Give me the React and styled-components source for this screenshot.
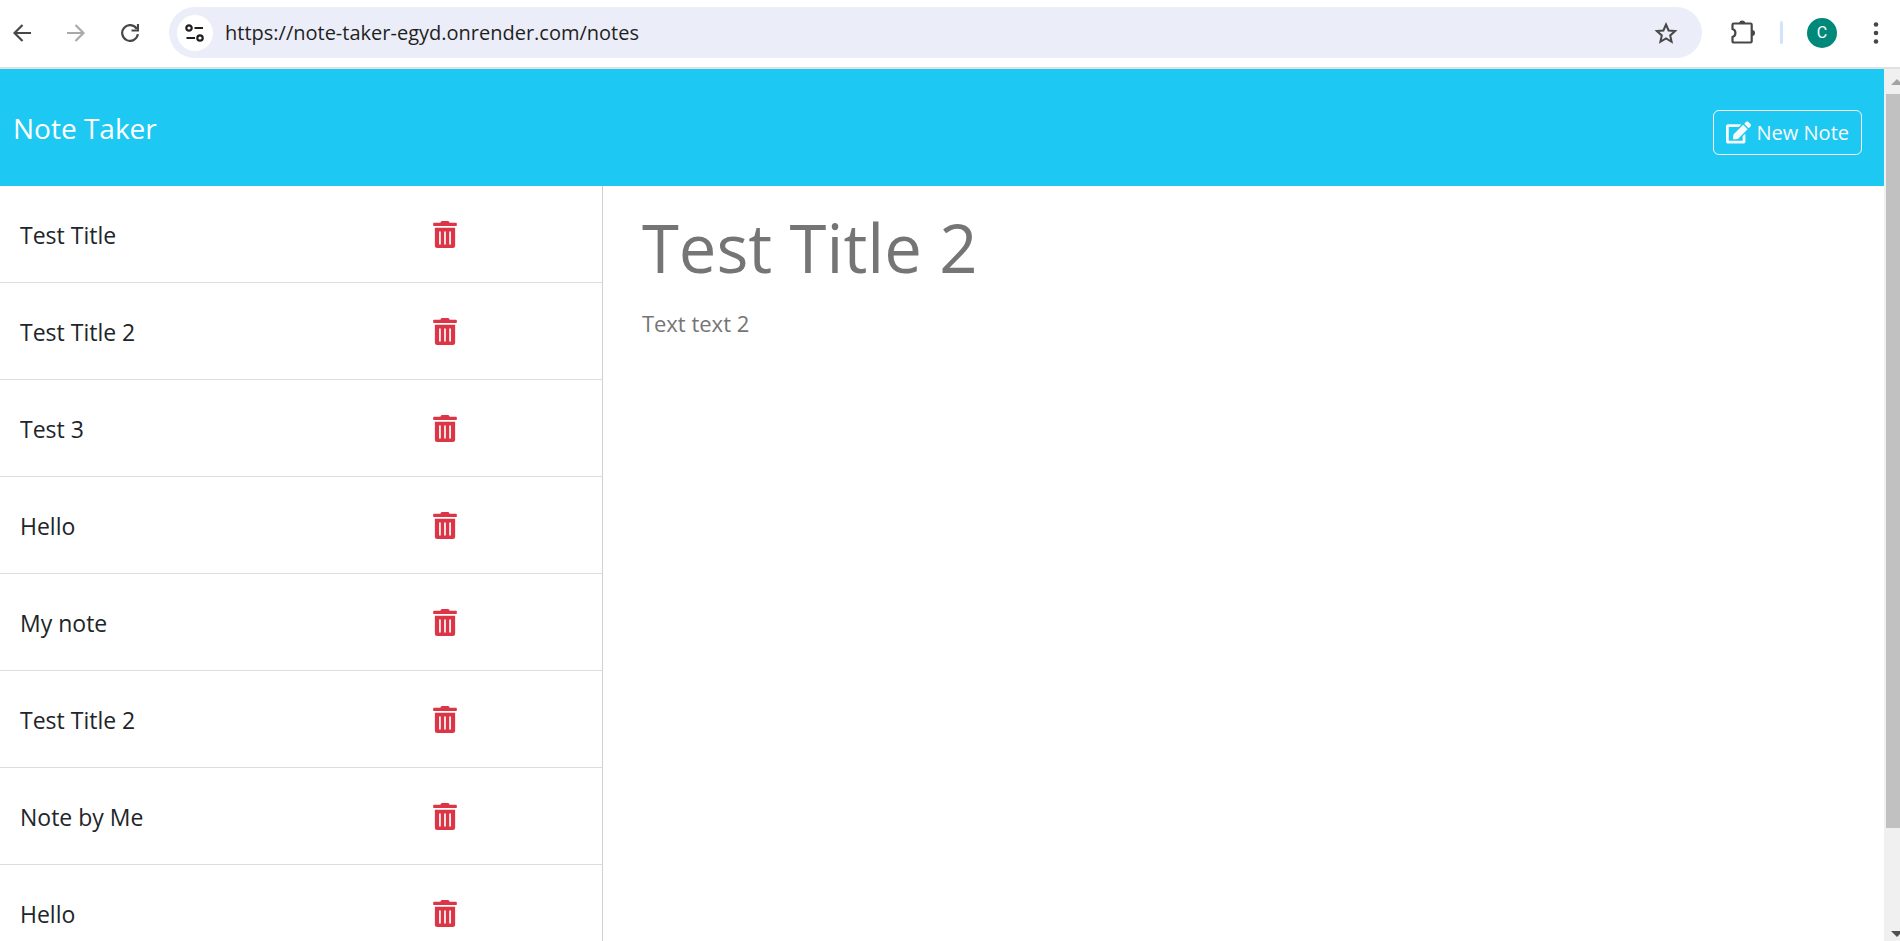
import React from "react";
import styled, { createGlobalStyle } from "styled-components";
import { FaTrashAlt, FaEdit } from "react-icons/fa";

const GlobalStyle = createGlobalStyle`
  *, *::before, *::after { box-sizing: border-box; }
  body {
    margin: 0;
    background: #fff;
    color: #212529;
    font-family: "Segoe UI", "Open Sans", "Noto Sans", sans-serif;
    font-size: 22px;
    line-height: 32px;
  }
  button, input, textarea { font: inherit; color: inherit; }
`;

const Window = styled.div`
  display: flex;
  flex-direction: column;
  height: 100vh;
  overflow: hidden;
`;

const Toolbar = styled.div`
  display: flex;
  align-items: center;
  flex: none;
  height: 69px;
  padding: 0 12px 2px 10px;
  border-bottom: 2px solid #e0e0e0;
  color: #474747;
`;

const ToolButton = styled.button`
  display: flex;
  align-items: center;
  justify-content: center;
  flex: none;
  width: 24px;
  height: 32px;
  margin-right: ${(p) => p.$gap || 0}px;
  padding: 0;
  border: 0;
  background: none;
  color: ${(p) => (p.disabled ? "#a9a9a9" : "#474747")};
  svg { display: block; flex: none; }
`;

const AddressBar = styled.div`
  display: flex;
  align-items: center;
  flex: 1;
  height: 51px;
  margin-right: 29px;
  padding: 0 24px 0 8px;
  border-radius: 26px;
  background: #ebeef8;
`;

const SiteInfo = styled.button`
  display: flex;
  align-items: center;
  justify-content: center;
  flex: none;
  width: 36px;
  height: 36px;
  padding: 0;
  border: 0;
  border-radius: 50%;
  background: #fff;
`;

const Url = styled.input`
  flex: 1;
  min-width: 0;
  padding: 0 0 0 12px;
  border: 0;
  outline: 0;
  background: none;
  color: #1f1f1f;
  font-size: 20px;
`;

const Divider = styled.span`
  flex: none;
  width: 3px;
  height: 23px;
  margin-right: 24px;
  border-radius: 2px;
  background: #d3e3fd;
`;

const Avatar = styled.button`
  flex: none;
  width: 30px;
  height: 30px;
  margin-right: 27px;
  padding: 0;
  border: 0;
  border-radius: 50%;
  background: #00897b;
  color: #fff;
  font-family: Roboto, sans-serif;
  font-size: 16px;
  line-height: 30px;
`;

const Viewport = styled.div`
  display: flex;
  flex: 1;
  min-height: 0;
`;

const Page = styled.div`
  display: flex;
  flex-direction: column;
  flex: 1;
  min-width: 0;
  overflow: hidden;
`;

const Header = styled.header`
  display: flex;
  align-items: center;
  justify-content: space-between;
  flex: none;
  height: 117px;
  padding: 12px 22px 4px 13px;
  background: #1dc8f3;
  color: #fff;
`;

const Brand = styled.a`
  padding-bottom: 8px;
  color: inherit;
  font-size: 28px;
  text-decoration: none;
`;

const NewNote = styled.button`
  display: flex;
  align-items: center;
  gap: 6px;
  height: 45px;
  margin-top: 2px;
  padding: 0 12px;
  border: 1px solid #f8f9fa;
  border-radius: 6px;
  background: none;
  color: #f8f9fa;
  font-size: 20px;
`;

const Content = styled.main`
  display: flex;
  flex: 1;
  min-height: 0;
`;

const NoteList = styled.ul`
  flex: none;
  width: 32%;
  margin: 0;
  padding: 0;
  border-right: 1px solid #ced0d2;
  list-style: none;
  overflow: hidden;
`;

const NoteRow = styled.li`
  display: grid;
  grid-template-columns: 72% auto;
  align-items: center;
  height: 97px;
  border-bottom: 1px solid #dcdddf;
`;

const NoteTitle = styled.button`
  padding: 2px 20px 0;
  border: 0;
  background: none;
  font-size: 23px;
  text-align: left;
`;

const DeleteButton = styled.button`
  justify-self: start;
  padding: 0;
  border: 0;
  background: none;
  color: #dc3545;
  svg {
    display: block;
    width: 24px;
    height: 27px;
  }
`;

const Editor = styled.section`
  display: flex;
  flex-direction: column;
  flex: 1;
  min-width: 0;
  padding: 16px 39px;
  color: #757575;
`;

const TitleInput = styled.input`
  width: 100%;
  height: 90px;
  padding: 0;
  border: 0;
  outline: 0;
  font-size: 67px;
`;

const TextInput = styled.textarea`
  flex: 1;
  width: 100%;
  margin-top: 15px;
  padding: 0;
  border: 0;
  outline: 0;
  resize: none;
`;

const ScrollTrack = styled.div`
  display: flex;
  flex-direction: column;
  flex: none;
  width: 16px;
  padding-left: 2px;
  background: #f0f0f0;
  overflow: hidden;
`;

const ScrollArrow = styled.svg`
  display: block;
  flex: none;
  width: 25px;
  height: 25px;
`;

const ScrollThumb = styled.div`
  flex: 734;
  background: #c1c1c1;
`;

const ScrollRest = styled.div`
  flex: 88;
`;

const notes = [
  "Test Title",
  "Test Title 2",
  "Test 3",
  "Hello",
  "My note",
  "Test Title 2",
  "Note by Me",
  "Hello",
];

const BackIcon = () => (
  <svg width="18" height="18" viewBox="0 0 18 18" fill="none" stroke="currentColor" strokeWidth="2.2">
    <path d="M18 9H2M9.5 1L1.5 9l8 8" />
  </svg>
);

const ForwardIcon = () => (
  <svg width="18" height="18" viewBox="0 0 18 18" fill="none" stroke="currentColor" strokeWidth="2.2">
    <path d="M0 9h16M8.500 1l8 8-8 8" />
  </svg>
);

const ReloadIcon = () => (
  <svg width="18" height="18" viewBox="0 0 18 18" fill="none" stroke="currentColor" strokeWidth="2.2">
    <path d="M15.800 4.800A7.900 7.900 0 1 0 16.900 10.200" />
    <path d="M17 0v6.500H10.500" />
  </svg>
);

const TuneIcon = () => (
  <svg width="20" height="18" viewBox="0 0 20 18" fill="none" stroke="#1f1f1f" strokeWidth="2.2">
    <circle cx="4" cy="4" r="2.700" />
    <path d="M9.500 4H18M1.500 14H10" />
    <circle cx="15" cy="14" r="2.700" />
  </svg>
);

const StarIcon = () => (
  <svg width="24" height="24" viewBox="0 0 24 24" fill="none" stroke="currentColor" strokeWidth="2">
    <path d="M12 3.500l2.600 6 6.500.6-4.900 4.300 1.400 6.400L12 17.500l-5.600 3.300 1.400-6.400-4.900-4.300 6.500-.6z" />
  </svg>
);

const PuzzleIcon = () => (
  <svg width="26" height="26" viewBox="0 0 26 26" fill="none" stroke="currentColor" strokeWidth="2.200">
    <path d="M3.700 3.500h16.800q1.200 0 1.200 1.200v16.600q0 1.200-1.200 1.200H3.700q-1.200 0-1.200-1.200v-4.300a4.200 4.200 0 0 0 0-8V4.700q0-1.200 1.200-1.200z" />
    <path d="M9 3a3.300 3.300 0 0 1 6.400 0zM22 10a3 3 0 0 1 0 6z" fill="currentColor" stroke="none" />
  </svg>
);

const MenuIcon = () => (
  <svg width="6" height="22" viewBox="0 0 6 22" fill="currentColor">
    <circle cx="3" cy="2.500" r="2.300" />
    <circle cx="3" cy="11" r="2.300" />
    <circle cx="3" cy="19.500" r="2.300" />
  </svg>
);

export default function App() {
  return (
    <Window>
      <GlobalStyle />
      <Toolbar>
        <ToolButton aria-label="Back" $gap={30}><BackIcon /></ToolButton>
        <ToolButton aria-label="Forward" disabled $gap={30}><ForwardIcon /></ToolButton>
        <ToolButton aria-label="Reload" $gap={27}><ReloadIcon /></ToolButton>
        <AddressBar>
          <SiteInfo aria-label="Site information"><TuneIcon /></SiteInfo>
          <Url aria-label="Address" readOnly value="https://note-taker-egyd.onrender.com/notes" />
          <ToolButton aria-label="Bookmark"><StarIcon /></ToolButton>
        </AddressBar>
        <ToolButton aria-label="Extensions" $gap={25}><PuzzleIcon /></ToolButton>
        <Divider />
        <Avatar aria-label="Profile">C</Avatar>
        <ToolButton aria-label="Menu"><MenuIcon /></ToolButton>
      </Toolbar>
      <Viewport>
        <Page>
          <Header>
            <Brand href="/">Note Taker</Brand>
            <NewNote><FaEdit size={25} />New Note</NewNote>
          </Header>
          <Content>
            <NoteList>
              {notes.map((title, i) => (
                <NoteRow key={i}>
                  <NoteTitle>{title}</NoteTitle>
                  <DeleteButton aria-label={`Delete ${title}`}><FaTrashAlt /></DeleteButton>
                </NoteRow>
              ))}
            </NoteList>
            <Editor>
              <TitleInput aria-label="Note title" readOnly value="Test Title 2" />
              <TextInput aria-label="Note text" readOnly value="Text text 2" />
            </Editor>
          </Content>
        </Page>
        <ScrollTrack aria-hidden="true">
          <ScrollArrow viewBox="0 0 25 25"><path d="M5 16l6-6 6 6z" fill="#a3a3a3" /></ScrollArrow>
          <ScrollThumb />
          <ScrollRest />
          <ScrollArrow viewBox="0 0 25 25"><path d="M5 15l6 6 6-6z" fill="#505050" /></ScrollArrow>
        </ScrollTrack>
      </Viewport>
    </Window>
  );
}
